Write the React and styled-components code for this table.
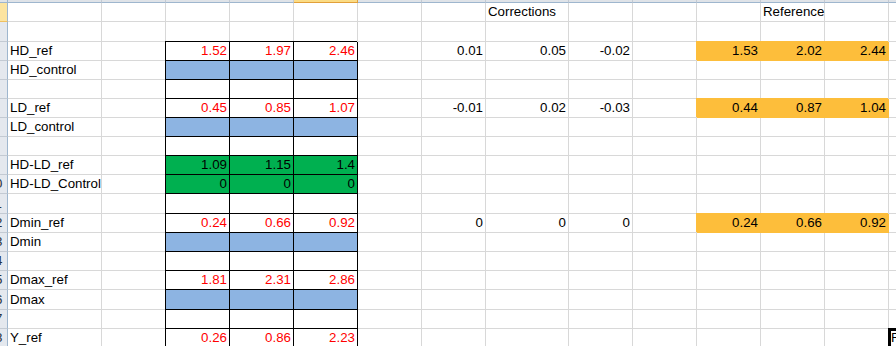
import React from "react";
import styled, { createGlobalStyle } from "styled-components";

const GlobalStyle = createGlobalStyle`
  html, body {
    margin: 0;
    padding: 0;
    background: #fff;
    overflow: hidden;
  }
  body {
    font-family: "Liberation Sans", Arial, sans-serif;
  }
`;

// column widths A..N, each including its right gridline
const COLS = [94, 64, 64, 64, 64, 64, 64, 83, 64, 64, 64, 64, 64, 64];
const SELECTED_COL = 4; // column E header is highlighted

const GRID = "#d8d8d8";

// look of every kind of cell
const KINDS = {
  plain: { bg: "#fff", line: GRID, color: "#000", shadow: "none" },
  boxed: { bg: "#fff", line: "#000", color: "#000", shadow: "-1px -1px 0 #000" },
  red: { bg: "#fff", line: "#000", color: "#ff0000", shadow: "-1px -1px 0 #000" },
  blue: { bg: "#8db4e2", line: "#000", color: "#000", shadow: "-1px -1px 0 #000" },
  green: { bg: "#00b050", line: "#000", color: "#000", shadow: "-1px -1px 0 #000" },
  orange: { bg: "#fdbe3b", line: "#fdbe3b", color: "#000", shadow: "-1px -1px 0 #fdbe3b" },
  active: { bg: "#fff", line: GRID, color: "#000", shadow: "inset 2px 2px 0 #000, -1px -1px 0 #000" },
};

const num = (t) => ({ text: t, align: "right" });

// one sheet row: label in A, block C..E, corrections G..I, reference K..M
const makeRow = (n, h, { label, block, blockKind, corr, ref, extra = {} } = {}) => {
  const cells = COLS.map(() => ({ kind: "plain", text: "" }));
  if (label) cells[0] = { kind: "plain", text: label };
  if (blockKind) {
    [2, 3, 4].forEach((c, i) => {
      cells[c] = { kind: blockKind, text: block ? block[i] : "", align: "right" };
    });
  }
  if (corr) [6, 7, 8].forEach((c, i) => (cells[c] = { kind: "plain", ...num(corr[i]) }));
  if (ref) [10, 11, 12].forEach((c, i) => (cells[c] = { kind: "orange", ...num(ref[i]) }));
  Object.entries(extra).forEach(([c, cell]) => (cells[c] = cell));
  return { n, h, cells };
};

const ROWS = [
  makeRow(1, 19, {
    extra: { 7: { kind: "plain", text: "Corrections" }, 11: { kind: "plain", text: "Reference" } },
  }),
  makeRow(2, 20),
  makeRow(3, 19, {
    label: "HD_ref",
    blockKind: "red",
    block: ["1.52", "1.97", "2.46"],
    corr: ["0.01", "0.05", "-0.02"],
    ref: ["1.53", "2.02", "2.44"],
  }),
  makeRow(4, 19, { label: "HD_control", blockKind: "blue" }),
  makeRow(5, 19, { blockKind: "boxed" }),
  makeRow(6, 19, {
    label: "LD_ref",
    blockKind: "red",
    block: ["0.45", "0.85", "1.07"],
    corr: ["-0.01", "0.02", "-0.03"],
    ref: ["0.44", "0.87", "1.04"],
  }),
  makeRow(7, 19, { label: "LD_control", blockKind: "blue" }),
  makeRow(8, 19, { blockKind: "boxed" }),
  makeRow(9, 19, { label: "HD-LD_ref", blockKind: "green", block: ["1.09", "1.15", "1.4"] }),
  makeRow(10, 19, { label: "HD-LD_Control", blockKind: "green", block: ["0", "0", "0"] }),
  makeRow(11, 20, { blockKind: "boxed" }),
  makeRow(12, 19, {
    label: "Dmin_ref",
    blockKind: "red",
    block: ["0.24", "0.66", "0.92"],
    corr: ["0", "0", "0"],
    ref: ["0.24", "0.66", "0.92"],
  }),
  makeRow(13, 19, { label: "Dmin", blockKind: "blue" }),
  makeRow(14, 19, { blockKind: "boxed" }),
  makeRow(15, 19, { label: "Dmax_ref", blockKind: "red", block: ["1.81", "2.31", "2.86"] }),
  makeRow(16, 20, { label: "Dmax", blockKind: "blue" }),
  makeRow(17, 19, { blockKind: "boxed" }),
  makeRow(18, 19, {
    label: "Y_ref",
    blockKind: "red",
    block: ["0.26", "0.86", "2.23"],
    extra: { 13: { kind: "active", text: "R" } },
  }),
];

const App = () => {
  return (
    <>
      <GlobalStyle />
      <Sheet>
        <Row $h={3}>
          <Corner />
          {COLS.map((w, c) => (
            <ColHead key={c} $w={w} $sel={c === SELECTED_COL} />
          ))}
        </Row>
        {ROWS.map((row) => (
          <Row key={row.n} $h={row.h}>
            <RowHead $sel={row.n === 1}>
              {/* single-digit numbers sit centred out of view; only two-digit ones peek in */}
              {row.n >= 10 && <RowNum>{row.n}</RowNum>}
            </RowHead>
            {row.cells.map((cell, c) => (
              <Cell key={c} $w={COLS[c]} $kind={cell.kind} $align={cell.align}>
                {cell.text}
              </Cell>
            ))}
          </Row>
        ))}
      </Sheet>
    </>
  );
};

export default App;

const Sheet = styled.div`
  width: 896px;
  height: 346px;
  overflow: hidden;
  display: flex;
  flex-direction: column;
`;

const Row = styled.div`
  display: flex;
  flex: none;
  height: ${(p) => p.$h}px;
`;

const Corner = styled.div`
  flex: none;
  box-sizing: border-box;
  width: 8px;
  background: #dfe3e8;
  border-right: 1px solid #9eb6ce;
  border-bottom: 1px solid #9eb6ce;
`;

const ColHead = styled.div`
  flex: none;
  box-sizing: border-box;
  width: ${(p) => p.$w}px;
  background: ${(p) => (p.$sel ? "#fbdc85" : "#dfe3e8")};
  border-right: 1px solid ${(p) => (p.$sel ? "#e2a03a" : "#c3cad3")};
  border-bottom: 1px solid ${(p) => (p.$sel ? "#e2a03a" : "#9eb6ce")};
`;

const RowHead = styled.div`
  flex: none;
  box-sizing: border-box;
  width: 8px;
  overflow: hidden;
  display: flex;
  align-items: flex-end;
  background: ${(p) => (p.$sel ? "#fce4a0" : "#e4e8ee")};
  border-right: 1px solid #9eb6ce;
  border-bottom: 1px solid ${(p) => (p.$sel ? "#f0c060" : "#c3cad3")};
  color: #27313d;
  font-size: 13.3px;
  line-height: 16px;
  padding-bottom: 1px;
`;

// Excel centres the number in a wider header; only its right edge is on screen
const RowNum = styled.span`
  flex: none;
  width: 26px;
  margin-left: -18px;
  text-align: center;
`;

const Cell = styled.div`
  flex: none;
  box-sizing: border-box;
  width: ${(p) => p.$w}px;
  display: flex;
  align-items: flex-end;
  justify-content: ${(p) => (p.$align === "right" ? "flex-end" : "flex-start")};
  padding: 0 2px 1px 2px;
  background: ${(p) => KINDS[p.$kind].bg};
  color: ${(p) => KINDS[p.$kind].color};
  border-right: 1px solid ${(p) => KINDS[p.$kind].line};
  border-bottom: 1px solid ${(p) => KINDS[p.$kind].line};
  box-shadow: ${(p) => KINDS[p.$kind].shadow};
  white-space: nowrap;
  font-size: 13.3px;
  line-height: 16px;
`;
